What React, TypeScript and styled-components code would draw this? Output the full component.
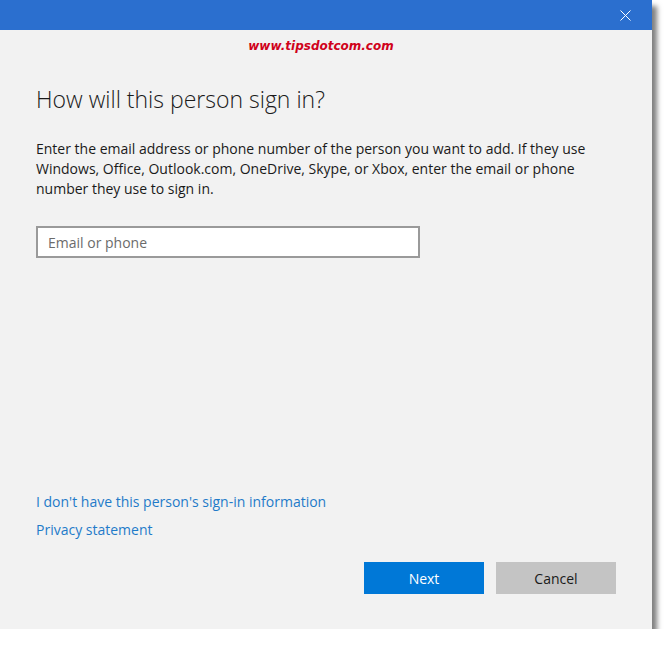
import React from 'react';
import styled, { createGlobalStyle } from 'styled-components';

const GlobalStyle = createGlobalStyle`
  html, body {
    margin: 0;
    padding: 0;
    background: #ffffff;
  }
  body {
    font-family: "Open Sans", "Noto Sans", sans-serif;
  }
`;

const Dialog = styled.div`
  width: 652px;
  height: 629px;
  background: #f2f2f2;
  display: flex;
  flex-direction: column;
  box-shadow: 5px 6px 5px rgba(0, 0, 0, 0.5);
`;

const TitleBar = styled.div`
  height: 30px;
  background: #2b6fcf;
  display: flex;
  justify-content: flex-end;
  align-items: center;
  padding-right: 15px;
  flex-shrink: 0;
`;

const CloseButton = styled.button`
  width: 24px;
  height: 24px;
  border: none;
  background: transparent;
  padding: 0;
  display: flex;
  align-items: center;
  justify-content: center;
  cursor: pointer;
`;

const Watermark = styled.div`
  text-align: center;
  font-family: "DejaVu Sans", Verdana, sans-serif;
  font-weight: 700;
  font-style: italic;
  font-size: 12px;
  color: #d0021b;
  margin-top: 8px;
  margin-right: 10px;
  line-height: 16px;
`;

const Content = styled.div`
  flex: 1;
  display: flex;
  flex-direction: column;
  padding: 0 36px 35px;
`;

const Heading = styled.h1`
  margin: 30px 0 0;
  font-size: 23px;
  font-weight: 300;
  color: #1a1a1a;
  line-height: 30px;
`;

const Description = styled.p`
  margin: 25px 0 0;
  font-size: 14px;
  line-height: 20px;
  color: #1a1a1a;
`;

const EmailInput = styled.input`
  box-sizing: border-box;
  width: 384px;
  height: 32px;
  margin-top: 27px;
  border: 2px solid #9a9a9a;
  background: #ffffff;
  padding: 0 10px;
  font-family: "Open Sans", "Noto Sans", sans-serif;
  font-size: 14px;
  color: #1a1a1a;
  outline: none;

  &::placeholder {
    color: #6b6b6b;
  }
`;

const Spacer = styled.div`
  flex: 1;
`;

const Links = styled.div`
  display: flex;
  flex-direction: column;
  align-items: flex-start;
  gap: 8px;
`;

const Link = styled.a`
  font-size: 14px;
  line-height: 20px;
  color: #1f7bc9;
  text-decoration: none;
  cursor: pointer;
`;

const ButtonRow = styled.div`
  display: flex;
  justify-content: flex-end;
  gap: 12px;
  margin-top: 22px;
`;

const DialogButton = styled.button<{ $primary?: boolean }>`
  width: 120px;
  height: 32px;
  border: none;
  font-family: "Open Sans", "Noto Sans", sans-serif;
  font-size: 14px;
  background: ${p => (p.$primary ? '#0078d7' : '#c4c4c4')};
  color: ${p => (p.$primary ? '#ffffff' : '#1a1a1a')};
  cursor: pointer;
`;

const App: React.FC = () => {
  return (
    <>
      <GlobalStyle />
      <Dialog>
        <TitleBar>
          <CloseButton aria-label="Close">
            <svg width="11" height="11" viewBox="0 0 11 11">
              <path d="M0.5 0.5 L10.5 10.5 M10.5 0.5 L0.5 10.5" stroke="#ffffff" strokeWidth="1" />
            </svg>
          </CloseButton>
        </TitleBar>
        <Watermark>www.tipsdotcom.com</Watermark>
        <Content>
          <Heading>How will this person sign in?</Heading>
          <Description>
            Enter the email address or phone number of the person you want to add. If they use
            <br />
            Windows, Office, Outlook.com, OneDrive, Skype, or Xbox, enter the email or phone
            <br />
            number they use to sign in.
          </Description>
          <EmailInput placeholder="Email or phone" />
          <Spacer />
          <Links>
            <Link>I don't have this person's sign-in information</Link>
            <Link>Privacy statement</Link>
          </Links>
          <ButtonRow>
            <DialogButton $primary>Next</DialogButton>
            <DialogButton>Cancel</DialogButton>
          </ButtonRow>
        </Content>
      </Dialog>
    </>
  );
};

export default App;
